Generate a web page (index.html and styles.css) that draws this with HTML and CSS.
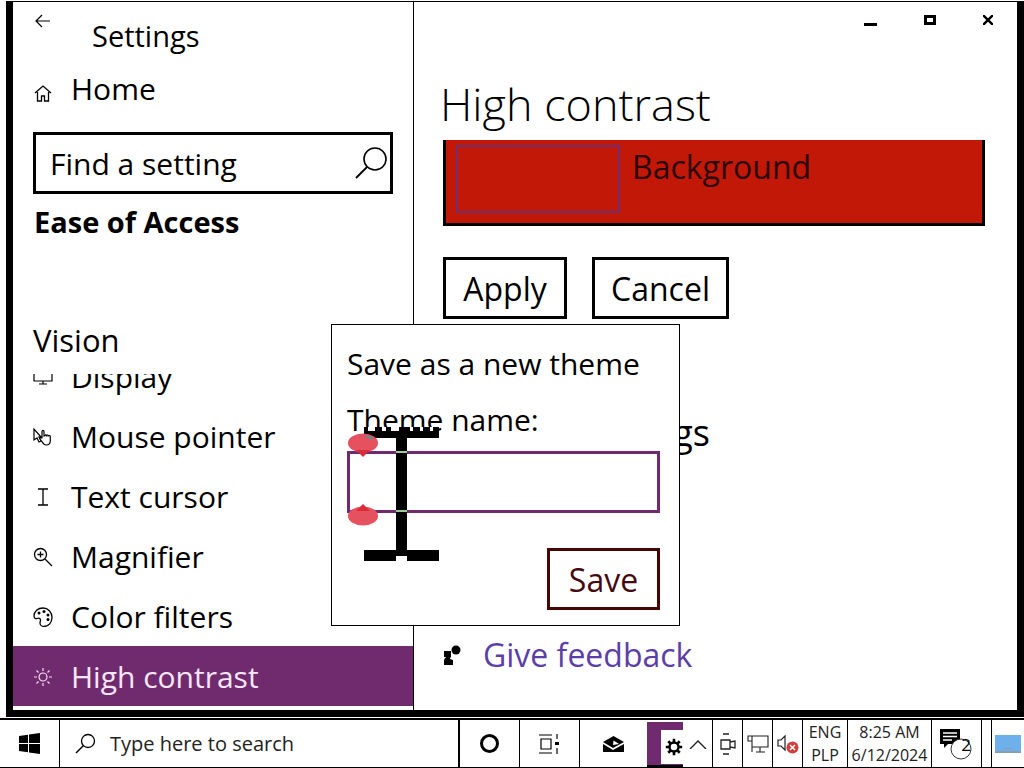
FILE: index.html
```html
<!DOCTYPE html>
<html lang="en">
<head>
<meta charset="UTF-8" />
<title>Settings</title>
<link rel="stylesheet" href="styles.css">
</head>
<body>
    <div class="window">
        <aside class="sidebar">
            <div class="top-row">
                <svg class="back-icon" width="18" height="14" viewBox="0 0 18 14"><path d="M16 7H2M8 1L2 7l6 6" fill="none" stroke="#000" stroke-width="1.2"/></svg>
                <span class="app-title">Settings</span>
            </div>
            <div class="nav-row home-row">
                <svg class="nav-icon" width="20" height="20" viewBox="0 0 20 20"><path d="M2 10L10 3l8 7M4.500 9v9h4v-5h3v5h4V9" fill="none" stroke="#000" stroke-width="1.300"/></svg>
                <span>Home</span>
            </div>
            <div class="search-box">
                <span>Find a setting</span>
                <svg width="36" height="36" viewBox="0 0 36 36"><circle cx="21" cy="14" r="11" fill="none" stroke="#000" stroke-width="1.600"/><path d="M13 22L2 33" stroke="#000" stroke-width="1.800"/></svg>
            </div>
            <div class="group-title">Ease of Access</div>
            <div class="vision-title">Vision</div>
            <div class="nav-scroll">
                <div class="nav-list">
                    <div class="nav-row">
                        <svg class="nav-icon" width="20" height="20" viewBox="0 0 20 20"><path d="M1 3h18v11H1zM10 14v3M6 17h8" fill="none" stroke="#000" stroke-width="1.200"/></svg>
                        <span>Display</span>
                    </div>
                    <div class="nav-row">
                        <svg class="nav-icon" width="20" height="20" viewBox="0 0 20 20"><path d="M1 2v11l3-2 2 4 2-1-2-4h2zM9 11V4.500c0-1.500 2-1.500 2 0V9l1-.5c.5-1 1.500-.5 1.500 0 .5-.8 1.800-.4 1.800.3.600-.5 2-.2 2 .7v4c0 3-2 4.500-4 4.500s-3-1-4-3l-2.500-3c-.5-1 .8-1.700 1.500-1z" fill="#fff" stroke="#000" stroke-width="1.200"/></svg>
                        <span>Mouse pointer</span>
                    </div>
                    <div class="nav-row">
                        <svg class="nav-icon" width="20" height="20" viewBox="0 0 20 20"><path d="M5 2h10M5 18h10M10 2v16" fill="none" stroke="#000" stroke-width="1.300"/></svg>
                        <span class="cursor-label">Text cursor</span>
                    </div>
                    <div class="nav-row">
                        <svg class="nav-icon" width="20" height="20" viewBox="0 0 20 20"><circle cx="7.500" cy="7.500" r="6" fill="none" stroke="#000" stroke-width="1.300"/><path d="M12 12l7 7M4.500 7.500h6M7.500 4.500v6" fill="none" stroke="#000" stroke-width="1.300"/></svg>
                        <span>Magnifier</span>
                    </div>
                    <div class="nav-row">
                        <svg class="nav-icon" width="20" height="20" viewBox="0 0 20 20"><path d="M10 1C5 1 1 4.500 1 9c0 2 1.500 3 3 2.500s3.500-.5 3.500 1.500c0 1-.5 2-.5 3 0 2 2 3.500 4 3.500 4.500 0 8-4 8-9C19 5 15 1 10 1z" fill="none" stroke="#000" stroke-width="1.300"/><circle cx="6" cy="6" r="1.500"/><circle cx="11" cy="4.500" r="1.500"/><circle cx="15" cy="8" r="1.500"/><circle cx="15" cy="12.500" r="1.500"/></svg>
                        <span class="filter-label">Color filters</span>
                    </div>
                    <div class="nav-row active">
                        <svg class="nav-icon" width="20" height="20" viewBox="0 0 20 20"><circle cx="10" cy="10" r="4" fill="none" stroke="#f6dcf6" stroke-width="1.200"/><path d="M10 1v3M10 16v3M1 10h3M16 10h3M3.500 3.500l2 2M14.500 14.500l2 2M3.500 16.500l2-2M14.500 5.500l2-2" fill="none" stroke="#f6dcf6" stroke-width="1.200"/></svg>
                        <span>High contrast</span>
                    </div>
                </div>
            </div>
        </aside>

        <main class="content">
            <div class="title-bar">
                <span class="win-btn win-min"></span>
                <span class="win-btn win-max"></span>
                <svg class="win-btn" width="10" height="10" viewBox="0 0 10 10"><path d="M0 0l10 10M10 0L0 10" stroke="#000" stroke-width="2.400"/></svg>
            </div>
            <h1 class="page-title">High contrast</h1>
            <div class="color-row">
                <div class="color-swatch"></div>
                <span>Background</span>
            </div>
            <div class="button-row">
                <button class="btn apply-btn">Apply</button>
                <button class="btn cancel-btn">Cancel</button>
            </div>
            <h2 class="related-title">Related settings</h2>
            <div class="feedback-row">
                <svg width="20" height="20" viewBox="0 0 20 20"><circle cx="13" cy="5" r="4.500"/><path d="M1 20v-4c0-3 3-5 6-5h1l-1 3 3 1v5z M1 6h7v6H1z"/></svg>
                <span>Give feedback</span>
            </div>
        </main>

        <div class="save-dialog">
            <div class="dialog-title">Save as a new theme</div>
            <label class="dialog-label" for="theme-name">Theme name:</label>
            <input class="dialog-input" id="theme-name" type="text" />
            <div class="dialog-actions">
                <button class="save-btn">Save</button>
            </div>
        </div>

        <!-- big text cursor + touch handles, sits over the dialog -->
        <svg class="text-cursor" width="95" height="140" viewBox="0 0 95 140">
            <path d="M20 0h75v11H20zM52 11h11v118H52zM20 123h32v11H20zM63 123h32v11H63z"/>
            <path d="M24 0h7v4h-7zM38 0h4v4h-4zM47 0h8v4h-8zM66 0h3v4h-3zM76 0h3v4h-3zM86 0h3v4h-3z" fill="#fff"/>
            <path d="M52 24h11v2H52zM52 83h11v2H52z" fill="#9ccb9c"/>
            <ellipse cx="19" cy="16" rx="15" ry="9.500" fill="#e5515f"/>
            <path d="M12 23h14l-7 7z" fill="#d92b3a"/>
            <ellipse cx="19" cy="89" rx="15" ry="9.500" fill="#e5515f"/>
            <path d="M12 84h14l-7-7z" fill="#d92b3a"/>
            <path d="M19 8l9 2 1 3z" fill="#2aa79b"/>
        </svg>
    </div>

    <footer class="taskbar">
        <div class="task-cell start-cell">
            <svg width="21" height="21" viewBox="0 0 21 21"><path d="M0 3l9-1.300V10H0zM10 1.500L21 0v10H10zM0 11h9v8.300L0 18zM10 11h11v10l-11-1.500z"/></svg>
        </div>
        <div class="task-cell search-cell">
            <svg width="21" height="21" viewBox="0 0 21 21"><circle cx="13" cy="8" r="6.500" fill="none" stroke="#000" stroke-width="1.300"/><path d="M8.500 12.500L1 20" stroke="#000" stroke-width="1.400"/></svg>
            <span>Type here to search</span>
        </div>
        <div class="task-cell cortana-cell"><span class="ring"></span></div>
        <div class="task-cell view-cell">
            <svg width="22" height="20" viewBox="0 0 22 20"><path d="M0 1h13M0 19h13M2 5h10v10H2zM18 0v5M18 14v6" fill="none" stroke="#000" stroke-width="1.200"/><path d="M16 8h4v3h-4z"/></svg>
        </div>
        <div class="task-cell mail-cell">
            <svg width="21" height="16" viewBox="0 0 21 16"><path d="M0 6l10.500-6L21 6 10 12z M0 8l10 6 11-6v8H0z"/><path d="M10.500 4.500L16 8l-6 1z" fill="#fff"/></svg>
        </div>
        <div class="settings-cell">
            <div class="settings-inner">
                <svg width="22" height="22" viewBox="0 0 22 22"><circle cx="11" cy="11" r="5.500" fill="none" stroke="#000" stroke-width="3"/><path d="M11 1v4M11 17v4M1 11h4M17 11h4M4 4l3 3M15 15l3 3M4 18l3-3M15 7l3-3" stroke="#000" stroke-width="3.200"/></svg>
            </div>
        </div>
        <div class="tray-cell">
            <svg width="18" height="10" viewBox="0 0 18 10"><path d="M1 10l8-8 8 8" fill="none" stroke="#222" stroke-width="1.400"/></svg>
        </div>
        <div class="tray-cell">
            <svg width="16" height="22" viewBox="0 0 16 22"><path d="M3 1h6M3 21h6M1 7h9v9H1zM10 9l5-1v7l-5-1z" fill="none" stroke="#222" stroke-width="1.300"/></svg>
        </div>
        <div class="tray-cell">
            <svg width="22" height="18" viewBox="0 0 22 18"><path d="M5 1h16v11H5M5 6v11M9 17h9M13 12v5M1 1h4v5H1z" fill="none" stroke="#222" stroke-width="1.100"/></svg>
        </div>
        <div class="tray-cell">
            <svg width="22" height="20" viewBox="0 0 22 20"><path d="M1 6h3l4-4v14l-4-4H1z" fill="none" stroke="#222" stroke-width="1.200"/><circle cx="15.500" cy="13.500" r="6" fill="#d23c3c"/><path d="M13 11l5 5M18 11l-5 5" stroke="#fff" stroke-width="1.500"/></svg>
        </div>
        <div class="tray-cell lang-cell"><span>ENG</span><span>PLP</span></div>
        <div class="tray-cell clock-cell"><span>8:25 AM</span><span>6/12/2024</span></div>
        <div class="tray-cell notify-cell">
            <svg width="36" height="36" viewBox="0 0 36 36"><path d="M1 3h20v15H9l-4 4v-4H1z"/><path d="M4 7h14M4 10.500h14M4 14h9" stroke="#fff" stroke-width="1.300"/><circle cx="22" cy="23" r="10" fill="#fff" stroke="#333" stroke-width="1"/></svg>
            <span class="notify-count">2</span>
        </div>
        <div class="show-gap"></div>
        <div class="tray-cell desktop-cell">
            <svg width="26" height="18" viewBox="0 0 26 18"><path d="M0 0h26v16H0z" fill="#6eb0ec"/><path d="M0 16h26v2H0zM9 13h8v1H9z" fill="#8a9cb0"/></svg>
        </div>
    </footer>
</body>
</html>
```

FILE: styles.css
```css
html, body {
    margin: 0;
    height: 100%;
}

body {
    width: 1024px;
    height: 768px;
    overflow: hidden;
    background: white;
    color: black;
    font-family: "Open Sans", "Noto Sans", sans-serif;
    display: flex;
    flex-direction: column;
}

.window {
    position: relative;
    height: 716px;
    margin-left: 6px;
    box-sizing: border-box;
    display: flex;
    background: white;
    border-top: 1px solid black;
    border-left: 7px solid black;
    border-right: 7px solid black;
    border-bottom: 7px solid black;
    margin-top: 1px;
    margin-bottom: 1px;
}

.sidebar {
    width: 400px;
    flex-shrink: 0;
    display: flex;
    flex-direction: column;
    border-right: 1px solid black;
}

.top-row {
    height: 56px;
    display: flex;
    position: relative;
}

.back-icon {
    margin: 12px 0 0 21px;
}

.app-title {
    margin-left: 40px;
    margin-top: 12px;
    font-size: 29px;
    line-height: 44px;
}

.nav-row {
    height: 60px;
    display: flex;
    align-items: center;
    font-size: 30px;
    padding-left: 20px;
}

.nav-icon {
    margin-right: 18px;
    flex-shrink: 0;
    margin-top: 2px;
}

.home-row {
    height: 60px;
}

.home-row .nav-icon {
    margin-top: 10px;
}

.search-box {
    box-sizing: border-box;
    width: 360px;
    height: 62px;
    margin: 14px 0 0 20px;
    border: 3px solid black;
    padding: 0 0 0 14px;
    display: flex;
    align-items: center;
    justify-content: space-between;
    font-size: 30px;
}

.group-title {
    font-size: 29px;
    font-weight: 700;
    margin: 8px 0 0 21px;
    line-height: 40px;
}

.vision-title {
    font-size: 31px;
    margin: 76px 0 0 20px;
    line-height: 44px;
}

.nav-scroll {
    flex: 1;
    overflow: hidden;
    margin-top: 12px;
}

.nav-list {
    margin-top: -28px;
}

.nav-row.active {
    background: #702b6f;
    color: #f9e6f9;
}

.content {
    flex: 1;
    padding: 0 0 0 29px;
}

.title-bar {
    height: 36px;
    display: flex;
    justify-content: flex-end;
    align-items: center;
    gap: 47px;
    padding-right: 24px;
}

.win-btn {
    display: block;
}

.win-min {
    width: 13px;
    height: 3px;
    background: black;
    margin-top: 8px;
}

.win-max {
    width: 12px;
    height: 10px;
    border: 3px solid black;
    box-sizing: border-box;
}

.page-title {
    margin: 38px 0 0 -3px;
    font-size: 45px;
    font-weight: 300;
    line-height: 56px;
}

.color-row {
    box-sizing: border-box;
    width: 542px;
    height: 86px;
    margin-top: 8px;
    background: #c21807;
    border-left: 3px solid black;
    border-right: 3px solid black;
    border-bottom: 3px solid black;
    padding: 5px 0 0 10px;
    display: flex;
    font-size: 32px;
    color: #2b0306;
}

.color-swatch {
    box-sizing: border-box;
    width: 164px;
    height: 68px;
    border: 2px solid #6e3070;
    margin-right: 12px;
}

.button-row {
    display: flex;
    gap: 25px;
    margin-top: 31px;
}

.btn {
    box-sizing: border-box;
    height: 62px;
    border: 3px solid black;
    background: white;
    font-family: inherit;
    font-size: 32px;
    color: black;
    padding: 0;
}

.apply-btn {
    width: 124px;
}

.cancel-btn {
    width: 137px;
}

.related-title {
    margin: 89px 0 0 0;
    font-size: 36px;
    font-weight: 400;
    line-height: 50px;
}

.feedback-row {
    display: flex;
    align-items: center;
    gap: 20px;
    margin-top: 175px;
    font-size: 32px;
    color: #5c3ea8;
}

.save-dialog {
    position: absolute;
    left: 318px;
    top: 322px;
    width: 349px;
    height: 302px;
    box-sizing: border-box;
    border: 1px solid black;
    background: white;
    padding: 16px 19px 0 15px;
    display: flex;
    flex-direction: column;
}

.dialog-title {
    font-size: 30px;
    line-height: 46px;
}

.dialog-label {
    font-size: 30px;
    line-height: 46px;
    margin-top: 10px;
}

.dialog-input {
    box-sizing: border-box;
    width: 313px;
    height: 62px;
    margin-top: 8px;
    border: 3px solid #702b6f;
    background: transparent;
}

.dialog-actions {
    display: flex;
    justify-content: flex-end;
    margin-top: 35px;
}

.save-btn {
    box-sizing: border-box;
    width: 113px;
    height: 62px;
    border: 3px solid #450606;
    background: white;
    font-family: inherit;
    font-size: 32px;
    color: #450a10;
    padding: 0;
}

.text-cursor {
    position: absolute;
    left: 331px;
    top: 425px;
}

.taskbar {
    box-sizing: border-box;
    height: 50px;
    display: flex;
    border-top: 2px solid black;
    border-bottom: 1px solid black;
}

.task-cell, .tray-cell {
    box-sizing: border-box;
    display: flex;
    align-items: center;
    justify-content: center;
    border-right: 1px solid black;
    flex-shrink: 0;
}

.start-cell { width: 60px; }

.search-cell {
    width: 400px;
    justify-content: flex-start;
    padding-left: 15px;
    gap: 14px;
    font-size: 20px;
    color: #222;
    border-right-width: 2px;
}

.cortana-cell { width: 60px; }
.view-cell { width: 60px; }
.mail-cell { width: 67px; border-right: none; }

.ring {
    box-sizing: border-box;
    width: 19px;
    height: 19px;
    border: 3px solid black;
    border-radius: 50%;
}

.settings-cell {
    box-sizing: border-box;
    width: 36px;
    background: #702b6f;
    padding: 8px 0 0 14px;
    border-bottom: 2px solid black;
    margin-top: 2px;
}

.settings-inner {
    height: 34px;
    background: white;
    display: flex;
    align-items: center;
    padding-left: 4px;
    overflow: hidden;
}

.tray-cell {
    width: 30px;
}

.lang-cell, .clock-cell {
    flex-direction: column;
    color: #222;
    font-size: 16px;
    line-height: 23px;
}

.lang-cell { width: 45px; }
.clock-cell { width: 84px; }

.notify-cell {
    width: 50px;
    position: relative;
}

.notify-count {
    position: absolute;
    left: 26px;
    top: 14px;
    width: 16px;
    text-align: center;
    font-size: 17px;
    line-height: 22px;
}

.show-gap {
    width: 10px;
    border-right: 1px solid black;
    box-sizing: border-box;
}

.desktop-cell {
    width: 32px;
    border-right: none;
}
```
